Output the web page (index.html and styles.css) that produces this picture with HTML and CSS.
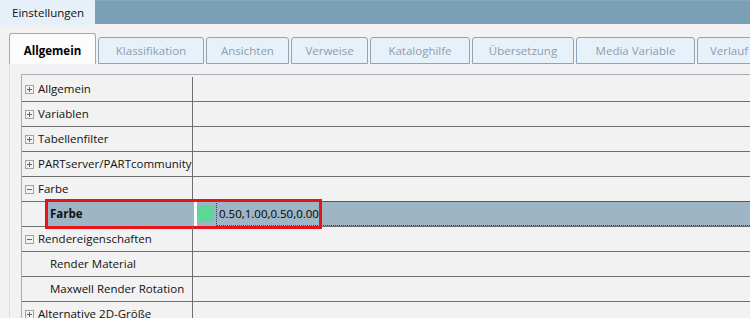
FILE: index.html
```html
<!DOCTYPE html>
<html>
<head>
<meta charset="utf-8">
<link rel="stylesheet" href="styles.css">
</head>
<body>
<div class="titlebar">
  <div class="title-tab">Einstellungen</div>
  <div class="title-fill"></div>
</div>
<div class="tabs">
  <div class="tab active w1">Allgemein</div>
  <div class="tab w2">Klassifikation</div>
  <div class="tab w3">Ansichten</div>
  <div class="tab w4">Verweise</div>
  <div class="tab w5">Kataloghilfe</div>
  <div class="tab w6">Übersetzung</div>
  <div class="tab w7">Media Variable</div>
  <div class="tab w8">Verlauf</div>
</div>
<div class="panel">
  <div class="grid">
    <div class="row"><div class="name"><svg class="exp" width="9" height="9" viewBox="0 0 9 9"><rect x="0.5" y="0.5" width="8" height="8" fill="none" stroke="#a3a3a3"/><path d="M2 4.5H7M4.5 2V7" stroke="#666"/></svg>Allgemein</div><div class="val"></div></div>
    <div class="row"><div class="name"><svg class="exp" width="9" height="9" viewBox="0 0 9 9"><rect x="0.5" y="0.5" width="8" height="8" fill="none" stroke="#a3a3a3"/><path d="M2 4.5H7M4.5 2V7" stroke="#666"/></svg>Variablen</div><div class="val"></div></div>
    <div class="row"><div class="name"><svg class="exp" width="9" height="9" viewBox="0 0 9 9"><rect x="0.5" y="0.5" width="8" height="8" fill="none" stroke="#a3a3a3"/><path d="M2 4.5H7M4.5 2V7" stroke="#666"/></svg>Tabellenfilter</div><div class="val"></div></div>
    <div class="row"><div class="name"><svg class="exp" width="9" height="9" viewBox="0 0 9 9"><rect x="0.5" y="0.5" width="8" height="8" fill="none" stroke="#a3a3a3"/><path d="M2 4.5H7M4.5 2V7" stroke="#666"/></svg>PARTserver/PARTcommunity</div><div class="val"></div></div>
    <div class="row"><div class="name"><svg class="exp" width="9" height="9" viewBox="0 0 9 9"><rect x="0.5" y="0.5" width="8" height="8" fill="none" stroke="#a3a3a3"/><path d="M2 4.5H7" stroke="#666"/></svg>Farbe</div><div class="val"></div></div>
    <div class="row selected">
      <div class="name child"><div class="sel-name">Farbe</div></div>
      <div class="val sel-val"><span class="swatch"></span><span class="valtext">0.50,1.00,0.50,0.00</span></div>
      <div class="redbox"></div>
    </div>
    <div class="row"><div class="name"><svg class="exp" width="9" height="9" viewBox="0 0 9 9"><rect x="0.5" y="0.5" width="8" height="8" fill="none" stroke="#a3a3a3"/><path d="M2 4.5H7" stroke="#666"/></svg>Rendereigenschaften</div><div class="val"></div></div>
    <div class="row"><div class="name child">Render Material</div><div class="val"></div></div>
    <div class="row"><div class="name child">Maxwell Render Rotation</div><div class="val"></div></div>
    <div class="row"><div class="name"><svg class="exp" width="9" height="9" viewBox="0 0 9 9"><rect x="0.5" y="0.5" width="8" height="8" fill="none" stroke="#a3a3a3"/><path d="M2 4.5H7M4.5 2V7" stroke="#666"/></svg>Alternative 2D-Größe</div><div class="val"></div></div>
  </div>
</div>
</body>
</html>
```
FILE: styles.css
```css
html, body {
  margin: 0;
  padding: 0;
}
body {
  width: 750px;
  height: 318px;
  overflow: hidden;
  background: #f2f2f2;
  font-family: "Open Sans", "Noto Sans", sans-serif;
  font-size: 11.5px;
  color: #111;
}
.titlebar {
  display: flex;
  height: 25px;
}
.title-tab {
  width: 83px;
  padding-left: 12px;
  background: #e6f0f8;
  line-height: 25px;
}
.title-fill {
  flex: 1;
  height: 24px;
  box-sizing: border-box;
  background: #7b9fb4;
  border-top: 1px dotted #95b3c4;
}
.tabs {
  display: flex;
  align-items: flex-start;
  gap: 2px;
  margin-top: 8px;
  padding-left: 9px;
  height: 31px;
}
.tab {
  box-sizing: border-box;
  height: 27px;
  margin-top: 4px;
  border: 1px solid #8da5ba;
  border-radius: 3px 3px 0 0;
  background: #e7f1fa;
  color: #8d9eb0;
  text-align: center;
  line-height: 25px;
  flex: none;
  white-space: nowrap;
}
.tab.active {
  height: 31px;
  margin-top: 0;
  border-color: #a9a9a9;
  border-bottom: none;
  background: #fcfcfc;
  color: #000;
  font-weight: bold;
  line-height: 33px;
}
.w1 { width: 87px; }
.w2 { width: 106px; }
.w3 { width: 83px; }
.w4 { width: 77px; }
.w5 { width: 100px; }
.w6 { width: 102px; }
.w7 { width: 119px; }
.w8 { width: 64px; }
.panel {
  margin-left: 9px;
  border-left: 1px solid #dedede;
  padding-top: 10px;
  padding-left: 11px;
}
.grid {
  border-top: 1px solid #ababbb;
  border-left: 1px solid #ababbb;
  padding-top: 2px;
}
.row {
  position: relative;
  display: grid;
  grid-template-columns: 171px 1fr;
  height: 25px;
  box-sizing: border-box;
  border-bottom: 1px solid #6e6e6e;
}
.name {
  display: flex;
  align-items: center;
  border-right: 1px solid #6e6e6e;
  padding-left: 3px;
  padding-bottom: 1px;
  white-space: nowrap;
  overflow: hidden;
}
.exp {
  flex: none;
  margin-right: 4px;
  margin-top: 1px;
}
.name.child {
  padding-left: 28px;
}
.row.selected .name.child {
  padding-left: 24px;
  padding-bottom: 0;
  border-right: none;
}
.sel-name {
  flex: 1;
  align-self: stretch;
  display: flex;
  align-items: center;
  padding-left: 4px;
  padding-bottom: 1px;
  background: #9db5c4;
  font-weight: bold;
}
.row.selected {
  grid-template-columns: 172px 1fr;
}
.sel-val {
  display: flex;
  align-items: stretch;
  background: #9db5c4;
  border-left: 3px solid #fafafa;
}
.swatch {
  flex: none;
  width: 17px;
  height: 17px;
  margin: 3px 2px 0 0;
  background: #5cd699;
}
.valtext {
  flex: 1;
  margin-top: -1px;
  border: 1px dotted #444;
  border-right: none;
  padding-left: 2px;
  line-height: 23px;
  color: #000;
}
.redbox {
  position: absolute;
  left: 23px;
  top: -3px;
  width: 277px;
  height: 30px;
  box-sizing: border-box;
  border: 3px solid #e8121b;
}
```
